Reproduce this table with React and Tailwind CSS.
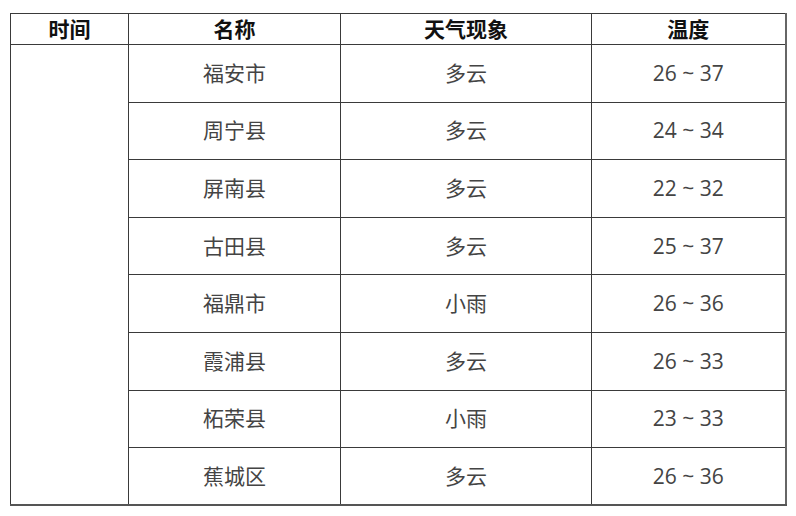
import React from 'react';

const rows = [
  ['福安市', '多云', '26 ~ 37'],
  ['周宁县', '多云', '24 ~ 34'],
  ['屏南县', '多云', '22 ~ 32'],
  ['古田县', '多云', '25 ~ 37'],
  ['福鼎市', '小雨', '26 ~ 36'],
  ['霞浦县', '多云', '26 ~ 33'],
  ['柘荣县', '小雨', '23 ~ 33'],
  ['蕉城区', '多云', '26 ~ 36'],
];

const cjk = { fontFamily: '"Open Sans", "Noto Sans CJK SC", sans-serif' };

export default function App() {
  return (
    <div className="w-[796px] h-[516px] bg-white pl-[10px] pt-[13px]" style={cjk}>
      <table className="border-collapse table-fixed w-[775px] text-[21px] leading-none">
        <colgroup>
          <col className="w-[118px]" />
          <col className="w-[212px]" />
          <col className="w-[251px]" />
          <col className="w-[194px]" />
        </colgroup>
        <thead>
          <tr className="h-[31px]">
            <th className="border border-[#3a3a3a] font-bold text-[#111] text-center">时间</th>
            <th className="border border-[#3a3a3a] font-bold text-[#111] text-center">名称</th>
            <th className="border border-[#3a3a3a] font-bold text-[#111] text-center">天气现象</th>
            <th className="border border-[#3a3a3a] font-bold text-[#111] text-center border-r-2 border-r-[#666]">温度</th>
          </tr>
        </thead>
        <tbody>
          {rows.map((r, i) => (
            <tr key={i} className="h-[57.6px]">
              {i === 0 && (
                <td rowSpan={8} className="border border-[#3a3a3a] border-b-2 border-b-[#555]"></td>
              )}
              <td className={`border border-[#3a3a3a] text-center text-[#444] ${i === 7 ? 'border-b-2 border-b-[#555]' : ''}`}>{r[0]}</td>
              <td className={`border border-[#3a3a3a] text-center text-[#444] ${i === 7 ? 'border-b-2 border-b-[#555]' : ''}`}>{r[1]}</td>
              <td className={`border border-[#3a3a3a] text-center text-[#444] border-r-2 border-r-[#666] ${i === 7 ? 'border-b-2 border-b-[#555]' : ''}`}>{r[2]}</td>
            </tr>
          ))}
        </tbody>
      </table>
    </div>
  );
}
